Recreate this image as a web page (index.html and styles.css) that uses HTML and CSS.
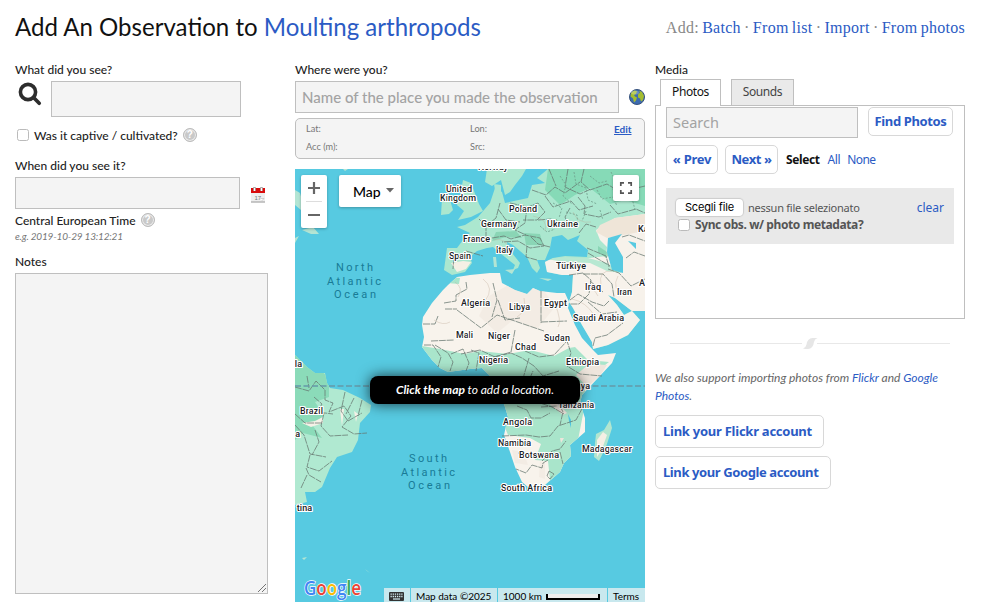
FILE: index.html
```html
<!DOCTYPE html>
<html lang="en">
<head>
<meta charset="utf-8">
<title>Add An Observation</title>
<link rel="stylesheet" href="styles.css">
</head>
<body>
<header class="head">
  <h1 class="title">Add An Observation to <a>Moulting arthropods</a></h1>
  <nav class="crumbs">Add: <a>Batch</a> · <a>From list</a> · <a>Import</a> · <a>From photos</a></nav>
</header>
<main class="cols">
  <section class="left">
    <div class="label">What did you see?</div>
    <div class="species">
      <svg class="glass" viewBox="0 0 24 24"><circle cx="10" cy="10" r="7.600" fill="none" stroke="#2d2d2d" stroke-width="3.600"/><path d="M15.800 15.800L21.200 21.200" stroke="#2d2d2d" stroke-width="3.700" stroke-linecap="round"/></svg>
      <div class="field species-field"></div>
    </div>
    <div class="captive"><span class="check"></span><span class="captive-text">Was it captive / cultivated?</span><span class="help">?</span></div>
    <div class="label when">When did you see it?</div>
    <div class="date">
      <div class="field date-field"></div>
      <svg class="cal" viewBox="0 0 14 16"><path d="M0 1h14v14.500H0z" fill="#eee"/><path d="M0 1h14v5H0z" fill="#d90b0b"/><path d="M0 15h14" stroke="#999"/><path d="M3.500 0v4M10.500 0v4" stroke="#aaa" stroke-width="2.600"/><path d="M3.500 1v3M10.500 1v3" stroke="#fff"/><text x="3.500" y="12.500" class="cal-text">17</text><path d="M9.500 11.500l3.500 0-2.500 2.500" fill="#fff" stroke="#aaa" stroke-width=".5"/></svg>
    </div>
    <div class="zone"><span class="zone-text">Central European Time</span><span class="help">?</span></div>
    <div class="example">e.g. 2019-10-29 13:12:21</div>
    <div class="label notes-label">Notes</div>
    <div class="field notes"><svg class="grip" viewBox="0 0 10 10"><path d="M1 9L9 1M5 9L9 5" stroke="#555" stroke-width=".8"/></svg></div>
  </section>

  <section class="mid">
    <div class="label">Where were you?</div>
    <div class="place">
      <div class="field place-field"><span class="place-text">Name of the place you made the observation</span></div>
      <svg class="globe" viewBox="0 0 16 16"><circle cx="8" cy="8" r="7.500" fill="#3d6bb0" stroke="#36517c"/><path d="M2 4l3-2.500 3 .5-1 3-2 1 1 1.500 2 1-1 3-2 2-1-4-2.500-2zM10 1.500l3 1.500 2 4-1 4-2 1.500-1-3-2-1 0-3 2-2z" fill="#a5bd2f"/><ellipse cx="6" cy="3.500" rx="4" ry="2" fill="#fff" opacity=".25"/></svg>
    </div>
    <div class="coords"><span>Lat:</span><span>Lon:</span><a class="edit">Edit</a><span>Acc (m):</span><span>Src:</span></div>
    <div class="map">
      <svg class="world" viewBox="295 169 350 433">
        <defs>
          <clipPath id="africa"><path d="M457 277L448 285 443 290 432 303 423 317 422 325 424 337 422 347 432 360 440 368 448 372 470 369 482 368 490 376 497 385 505 407 508 417 504 435 510 452 515 467 522 482 528 487 545 485 560 472 564 463 571 456 570 445 585 432 585 418 580 403 582 395 598 378 612 363 616 353 598 355 593 350 582 338 575 325 568 308 569 302 565 293 557 293 540 291 533 288 527 294 515 290 502 283 500 273 490 273 470 275Z"/></clipPath>
          <clipPath id="europe"><path d="M457 248L447 248 444 270 452 275 465 272 472 263 470 257 477 251 487 248 493 247 500 253 515 265 513 270 518 268 520 263 508 248 507 242 513 245 527 257 532 268 537 273 540 268 537 260 545 260 550 248 552 237 562 235 568 240 580 235 577 241 588 250 587 257 565 256 553 258 545 262 547 272 562 275 573 275 572 292 569 302 573 308 582 325 592 342 593 349 608 345 628 335 640 320 632 311 624 315 617 305 608 295 615 298 628 308 632 311 645 311 645 169 548 169 537 178 545 183 532 185 528 198 505 203 502 192 495 188 490 203 478 217 465 225 457 227 470 233 463 240Z"/></clipPath>
          <clipPath id="brazil"><path d="M295 355L307 367 315 373 325 373 327 383 330 388 343 390 360 398 371 405 370 412 360 423 358 440 352 452 337 457 330 468 322 487 315 492 305 492 307 502 295 505Z"/></clipPath>
        </defs>
        <rect x="295" y="169" width="350" height="433" fill="#57cae1"/>
        <g clip-path="url(#europe)">
          <rect x="440" y="169" width="205" height="190" fill="#abe7cf"/>
          <path d="M548 169H645V206L625 200 610 204 590 188 575 195 560 205 545 190Z" fill="#86dab7"/>
          <path d="M645 214L615 218 604 225 596 230 600 240 607 247 606 256 590 258 545 260 545 275 570 277 565 300 580 350 645 350Z" fill="#f7f2eb"/>
          <path d="M645 214L615 218 600 225 596 232 607 238 645 231Z" fill="#efe5d8"/>
          <path d="M546 259L565 257 588 258 607 263 622 273 607 271 590 263 565 262Z" fill="#b7e8d2"/>
          <path d="M451 263l12-2 8 1-5 7-9 3Z" fill="#f5f0e5"/>
          <path d="M496 232l20-1 6 7-16-1-14 4zM524 233l16 1 3 11-17 0zM598 246l12 8-4 4-8-6z" fill="#7ccda9" opacity=".7"/>
        </g>
        <path d="M487 169L485 182 492 186 501 180 505 195 510 192 515 185 522 176 526 169ZM494 184l7 1 0 11-5 0zM463 180l8 3 3 8 5 13 4 7-12 6-13 3 6-9-7-6 3-9zM442 199l8 1 3 10-4 4-8 1z" fill="#abe7cf"/>
        <path d="M295 190l5 3 2 7 6 8-7 2-6-5zM302 230l11-3 6 7-8 0zM295 238l4-2-4 7zM343 169h5l-3 2zM493 257l3 0 1 10-3 0zM505 270l10-1-3 5zM539 278l13 1-4 2zM302 558l5-1-3 3zM365 569l5 4-3-2z" fill="#b3e5d4"/>
        <g clip-path="url(#africa)">
          <rect x="415" y="270" width="205" height="220" fill="#f8f3ec"/>
          <path d="M415 345L440 349 465 354 480 351 508 354 530 350 554 356 569 348 575 347 588 360 609 362 585 380 585 404 578 440 565 485 550 480 548 461 535 460 541 444 530 438 508 435 490 390 420 380Z" fill="#a9e5cb"/>
          <path d="M450 277l10 1-1 6-12-1z" fill="#a9e5cb"/>
          <path d="M576 375l13-11 18 1-7 11-13 11zM548 403l10 0 9 10-4 2zM560 438l4 0-3 5z" fill="#eee5dc"/>
          <path d="M517 280l26 9 12 18-18 22-24-9-16 13-18-17 10-20zM540 461l5 2 0 16-6-2zM512 450l12 2 4 13-13-2z" fill="#f0e8df" opacity=".6"/>
          <path d="M563 377l8 3-3 7-5-3zM568 414l3 6 0 8-2-7zM557 404l2 8" fill="#4ec4e0"/>
        </g>
        <g clip-path="url(#brazil)">
          <rect x="295" y="350" width="80" height="160" fill="#b0e9d1"/>
          <path d="M295 355L310 361 329 378 329 397 315 402 324 415 313 426 322 438 303 433 295 440Z" fill="#8bdbb9"/>
          <path d="M302 423l13-2 8-4 0 6-12 4zM340 409l4 0-2 17zM354 411l4 3-2 8z" fill="#f5f1e7"/>
        </g>
        <path d="M610 420L612 428 607 444 603 453 599 461 594 457 595 443 596 434 604 430Z" fill="#b2e6d0"/><path d="M603 432l4 3-5 14-5 8 0-17z" fill="#f5efe4"/>
        <path d="M608 238L622 234 615 243 623 257 623 273 612 270 607 252ZM628 241l8 2 0 6-5-5z" fill="#57cae1"/>
        <g class="borders">
          <path d="M444 303l12-2 0-6 11-6-1-7M445 309h12M423 324h12l3-8M431 341l23-1M457 310l24 18 16-13 6 2 41 14M493 283l4 17-5 17M498 300l7 20 15-2M541 291v32M541 322l26-1M515 330l-4 22-16 5-15-7-19 4M424 345l9 0 8 12-3 10M435 345l13 8 5 9-3 9M451 354l12-5 6 14-3 8M471 350l8 3-3 18M493 357l18-4 11 5 12 8 9 10 16-5M525 351l14 6 15-2 13-14 4 12-4 13 13 8 22 2M510 387l17-2 6-14M529 358l-5 17-4 23M502 436l24-1 13 2 11-1 8-10 18-6 8-15M517 406l10 4 4 8 10 0 9-5M541 407l16-1M559 376l-4 20 8 16-3 13M534 401l18 6 12 7M548 460l-5 3-1 5-10-3-6 8-10-4M542 461l10-10 8-2 6-8M560 452l3 12M518 453l18 2M549 471l5 3-4 5-3-3z"/>
          <path d="M466 251l17 5M449 254l5 1-1 14M479 219l7 7 0 12M486 226l10-8 4-15M498 209l8 11 14 2M510 203l18 4 10-4 7 9-8 8-14 0M492 238l12-2 7 3 14-4 15 3 4 8-14 2-12-7-16 1M527 207l-2 16-10 7 11 5M538 220l13-1 11 7 8-4M531 237l7 7 12 3M527 246l-1 11 11 3M532 190l14 5 9-8 10 6 15-11M545 196l8 11 18-6 8 9 14-4M549 169l7 17M568 169l-3 18 15 7 11-5M584 169l-3 13 9 8 17-6 13 8 25-6M578 197l7 9-1 8 15 3 12-5M610 205l8 9 18-5 9 4M570 208l-5 9 5 12M579 233l7-9 10 3M587 248l19 8 3 11M588 253l22 13M569 275l14-2 8 7-2 14-10 10-9 0M583 274l20 0 9 10 2 13M608 269l11 4 12 13 14-7M590 281l13 11M570 300l8-6 14 8 12 4 5-5M593 346l2-8 12-3 16-12M588 302l14 12 15-2M622 237l7-2 16 6M626 258l8-6 11 4"/>
          <path d="M295 387l14 4 7-10 9 9 0 10 8 3-4 9 15-6 7 10-9 11 12 7 13-1M307 376l2 12M314 397l8 7-5 8 16 2M324 413l-3 13 9 10 18-1M295 414l10 9 17 0M295 425l9 10 6 19 16 3M315 430l4 12-7 13M310 455l-3 12 12 4 13-10M306 468l3 7 12 7M307 475l-6 13M345 392l-4 19 7 10 14-8M354 398l-8 16M362 400l-4 16"/>
        </g>
        <path class="states" d="M560 176l6 9-3 11 9 8M574 172l2 12 10 4 2 12 9 4M590 176l9 7 8-2M597 190l5 9 11-2 4 9M611 172l5 10-4 9M627 176l-4 10 8 8 9-2M553 203l9 5-3 10M566 212l11 3 1 11M586 211l-4 10M600 210l3 10M632 198l3 12M540 226l7 6 8-3M556 219l5 8"/>
        <path class="texture" d="M455 282q9 6 3 15m-24 23q9 6 16 2m33-43q12 9 2 22m70 3q7 17 3 23m-34-29q3 13-7 19m55-18q14 3 22 16m7-30q-3-15 11-14m6 5q-7 13 6 19m-40-12q10 5 14 13m-65-80q16 3 12 15m28-19q5 12 18 10m-97 18q12-3 15 10"/>
        <path d="M295 386H645" stroke="#6699a8" stroke-width="1.500" stroke-dasharray="6 2.500"/>
        <g class="ocean">
          <text x="336" y="271" textLength="37">North</text><text x="327" y="285" textLength="54">Atlantic</text><text x="334" y="298" textLength="42">Ocean</text>
          <text x="409" y="462" textLength="38">South</text><text x="401" y="476" textLength="54">Atlantic</text><text x="408" y="489" textLength="42">Ocean</text>
        </g>
        <g class="countries">
          <text x="478" y="170.500" textLength="30">Norway</text>
          <text x="446" y="192" textLength="26">United</text><text x="440" y="201" textLength="36">Kingdom</text>
          <text x="509" y="212" textLength="28">Poland</text><text x="481" y="227" textLength="36">Germany</text><text x="547" y="227" textLength="31">Ukraine</text><text x="463" y="242" textLength="27">France</text><text x="496" y="253" textLength="17">Italy</text><text x="449" y="259" textLength="22">Spain</text><text x="556" y="269" textLength="30">Türkiye</text><text x="638" y="232">Ka</text><text x="639" y="286">A</text><text x="585" y="290" textLength="16">Iraq</text><text x="617" y="295" textLength="15">Iran</text><text x="461" y="306" textLength="29">Algeria</text><text x="509" y="310" textLength="21">Libya</text><text x="544" y="306" textLength="23">Egypt</text><text x="573" y="321" textLength="51">Saudi Arabia</text><text x="456" y="338" textLength="17">Mali</text><text x="488" y="339" textLength="22">Niger</text><text x="544" y="341" textLength="26">Sudan</text><text x="515" y="350" textLength="21">Chad</text><text x="479" y="363" textLength="29">Nigeria</text><text x="566" y="365" textLength="33">Ethiopia</text><text x="565" y="389" textLength="25">Kenya</text><text x="558" y="408" textLength="36">Tanzania</text><text x="503" y="425" textLength="29">Angola</text><text x="498" y="446" textLength="33">Namibia</text><text x="519" y="458" textLength="40">Botswana</text><text x="582" y="452" textLength="50">Madagascar</text><text x="501" y="491" textLength="51">South Africa</text><text x="300" y="414" textLength="23">Brazil</text><text x="302" y="367" text-anchor="end">la</text><text x="300" y="437" text-anchor="end">a</text><text x="312" y="511" text-anchor="end">tina</text>
        </g>
        <text x="304" y="595" textLength="57" lengthAdjust="spacingAndGlyphs" class="google"><tspan fill="#4285f4">G</tspan><tspan fill="#ea4335">o</tspan><tspan fill="#fbbc04">o</tspan><tspan fill="#4285f4">g</tspan><tspan fill="#34a853">l</tspan><tspan fill="#ea4335">e</tspan></text>
      </svg>
      <div class="zoomer"><svg viewBox="0 0 26 53"><path d="M7 13H19M13 7V19M7 40H19" stroke="#666" stroke-width="2.200"/><path d="M5 26.500H21" stroke="#ddd"/></svg></div>
      <div class="maptype">Map<svg class="caret" viewBox="0 0 8 5"><path d="M0 0h8L4 4.500z" fill="#666"/></svg></div>
      <div class="full"><svg viewBox="0 0 26 26"><path d="M7.800 11V7.800H11M15 7.800h3.200V11M18.200 15v3.200H15M11 18.200H7.800V15" fill="none" stroke="#555" stroke-width="1.700"/></svg></div>
      <div class="tip"><span class="tip-text"><b>Click the map</b> to add a location.</span></div>
      <div class="attrib">
        <span class="kbd"><svg viewBox="0 0 15 9"><rect width="15" height="9" rx="1" fill="#333"/><path d="M1.500 2.200h12M1.500 4.500h12" stroke="#d5eef3" stroke-width="1.300" stroke-dasharray="1.300 .85"/><path d="M4 7h7" stroke="#d5eef3" stroke-width="1.200"/></svg></span>
        <span class="data">Map data ©2025</span>
        <span class="km">1000 km<i class="bar"></i></span>
        <span class="terms">Terms</span>
      </div>
    </div>
  </section>

  <section class="right">
    <div class="label">Media</div>
    <div class="tabs"><div class="tab on">Photos</div><div class="tab">Sounds</div></div>
    <div class="panel">
      <div class="row"><div class="field search"><span class="search-text">Search</span></div><a class="btn find"><span>Find Photos</span></a></div>
      <div class="row pager"><a class="btn prev"><span>« Prev</span></a><a class="btn next"><span>Next »</span></a><b class="select">Select</b><a class="all">All</a><a class="none">None</a></div>
      <div class="upload">
        <div class="file"><span class="choose">Scegli file</span><span class="nofile">nessun file selezionato</span><a class="clear">clear</a></div>
        <div class="sync"><span class="check"></span><b>Sync obs. w/ photo metadata?</b></div>
      </div>
    </div>
    <svg class="divider" viewBox="0 0 280 14"><path d="M0 6.500H132M147 6.500H280" stroke="#e8e8e8"/><path d="M133 11.500q3-1 3.500-4 1-6.500 6-6.500h5q-3 1-3.500 4-1 7-6 7-3 0-5-.5" fill="#e6e6e6"/></svg>
    <p class="support">We also support importing photos from <a>Flickr</a> and <a>Google<br>Photos</a>.</p>
    <a class="btn link flickr"><span>Link your Flickr account</span></a>
    <a class="btn link goog"><span>Link your Google account</span></a>
  </section>
</main>
</body>
</html>
```
FILE: styles.css
```css
* { box-sizing: border-box; }
body { margin: 0; width: 1000px; height: 608px; overflow: hidden; background: #fff; color: #222; font-family: Lato, "Liberation Sans", sans-serif; font-size: 12px; }
a { color: #2b5bc4; }
svg { display: block; }
.head { display: flex; justify-content: space-between; height: 62px; padding: 10px 35px 0 15px; }
.title { margin: 0; font-size: 24.05px; line-height: 33px; font-weight: 400; color: #111; white-space: nowrap; }
.crumbs { font: 16px/36px "Liberation Serif", serif; color: #888; white-space: nowrap; letter-spacing: .28px; word-spacing: -1.1px; }
.cols { display: flex; padding-left: 15px; }
.left { width: 280px; }
.mid { width: 350px; margin-right: 10px; }
.right { width: 310px; }
.label { height: 16px; line-height: 16px; font-weight: 500; white-space: nowrap; }
.field { background: #f4f4f4; border: 1px solid #bfbfbf; }
.species { display: flex; padding-top: 3px; }
.glass { width: 24px; height: 24px; margin: 1px 9px 0 3px; }
.species-field { width: 190px; height: 36px; }
.captive { display: flex; align-items: center; height: 18px; margin-top: 9px; padding-left: 2px; }
.check { width: 12px; height: 12px; border: 1px solid #bbb; border-radius: 2.500px; background: #fff; }
.captive-text { margin: 0 5px; font-weight: 500; }
.help { width: 14px; height: 14px; border-radius: 50%; background: #c9c9c9; border: 1px solid #bbb; box-shadow: inset 0 0 0 1px #eee; color: #fff; font: bold 10px/12px "Liberation Sans", sans-serif; text-align: center; }
.when { margin-top: 14px; }
.date { display: flex; align-items: flex-end; margin-top: 3px; }
.date-field { width: 225px; height: 32px; }
.cal { width: 14px; height: 16px; margin: 0 0 6px 11px; }
.cal-text { font: 6px "Liberation Sans", sans-serif; fill: #777; }
.zone { display: flex; align-items: center; height: 20px; margin-top: 1px; }
.zone-text { margin-right: 5px; font-weight: 500; }
.example { height: 12px; line-height: 12px; font-size: 10px; letter-spacing: -.18px; font-style: italic; color: #777; }
.notes-label { margin-top: 12px; }
.notes { display: flex; align-items: flex-end; justify-content: flex-end; width: 253px; height: 321px; margin-top: 3px; }
.grip { width: 10px; height: 10px; }
.place { display: flex; align-items: center; padding-top: 3px; }
.place-field { width: 324px; height: 32px; padding: 0 6px; font-size: 15px; line-height: 31px; color: #a3a3a3; font-weight: 500; white-space: nowrap; }
.globe { width: 16px; height: 16px; margin-left: 10px; }
.coords { display: grid; grid-template-columns: 164px 144px 20px; grid-auto-rows: 18px; height: 41px; margin-top: 5px; padding: 1px 10px; border: 1px solid #bfbfbf; border-radius: 5px; background: #f4f4f4; font-size: 9.200px; line-height: 18px; color: #777; }
.edit { font-size: 10px; font-weight: 700; text-decoration: underline; }
.map { position: relative; width: 350px; height: 433px; margin-top: 10px; overflow: hidden; }
.world { width: 350px; height: 433px; }
.borders path { fill: none; stroke: #66756f; stroke-width: .75; stroke-dasharray: 7 .8; }
.states { fill: none; stroke: #6f9d8a; stroke-width: .8; stroke-dasharray: 2 1.500; }
.texture { fill: none; stroke: #bda994; stroke-width: .7; opacity: .5; }
.ocean { font: 11px Roboto, sans-serif; fill: #187b96; }
.countries { font: 500 9px Roboto, sans-serif; fill: #202124; stroke: #fff; stroke-width: 2.200px; paint-order: stroke; stroke-linejoin: round; transform: translateY(-.5px); }
.google { font: 600 19.500px "Open Sans", sans-serif; stroke: #fff; stroke-width: 1.500px; paint-order: stroke; }
.zoomer, .maptype, .full { position: absolute; top: 6px; background: #fff; border-radius: 2px; box-shadow: 0 1px 3px #0004; }
.zoomer { left: 6px; width: 26px; height: 53px; }
.maptype { left: 44px; display: flex; align-items: center; gap: 5px; width: 62px; height: 32px; padding: 1px 0 0 14px; color: #000; font-size: 14px; font-weight: 500; }
.caret { width: 8px; height: 5px; margin-top: -3px; }
.full { right: 6px; width: 26px; height: 26px; }
.tip { position: absolute; left: 75px; top: 207px; width: 210px; height: 28px; border-radius: 8px; background: #000; color: #fff; box-shadow: 0 0 14px #000b; font-style: italic; line-height: 28px; text-align: center; white-space: nowrap; }
.attrib { position: absolute; right: 0; bottom: 0; display: flex; gap: 1px; height: 14px; color: #000; font-size: 10px; line-height: 17px; white-space: nowrap; }
.attrib > span { display: block; height: 14px; background: #c8e8ee; }
.attrib .kbd { width: 26px; padding: 4px 0 0 5px; }
.kbd svg { width: 15px; height: 9px; }
.attrib .data { width: 86px; padding-left: 5px; }
.attrib .km { display: flex; width: 109px; padding-left: 5px; }
.bar { width: 54px; height: 6px; margin: 6px 0 0 4px; border: 2px solid #000; border-top: 0; background: #eee; }
.attrib .terms { width: 37px; padding-left: 5px; }
.tabs { display: flex; gap: 10px; height: 26px; margin-top: 1px; padding-left: 5px; font: 12px/24px "Noto Sans", sans-serif; letter-spacing: -.4px; }
.tab { width: 63px; height: 26px; border: 1px solid #bfbfbf; border-bottom: 0; background: #eaeaea; text-align: center; color: #444; }
.tab.on { position: relative; width: 61px; height: 27px; background: #fff; color: #111; }
.panel { width: 310px; height: 214px; padding: 1px 10px; border: 1px solid #bfbfbf; font-family: "Noto Sans", sans-serif; }
.row { display: flex; white-space: nowrap; }
.search { width: 192px; height: 31px; margin-right: 10px; padding-left: 6px; font-size: 14.500px; line-height: 29px; color: #a3a3a3; }
.btn { display: block; height: 29px; border: 1px solid #d8d8d8; border-radius: 5px; font: bold 13px/27px "Noto Sans", sans-serif; letter-spacing: -.25px; text-align: center; white-space: nowrap; }
.find { width: 85px; letter-spacing: -.38px; }
.pager { align-items: center; margin-top: 7px; }
.prev { width: 52px; margin-right: 7px; }
.next { width: 53px; margin-right: 8px; letter-spacing: -.4px; }
.select { color: #111; margin-right: 8px; letter-spacing: -.4px; }
.all { margin-right: 7px; letter-spacing: -.4px; }
.none { letter-spacing: -.6px; }
.upload { width: 288px; height: 56px; margin-top: 14px; padding: 10px 10px 0; background: #e9e9e9; }
.file { display: flex; align-items: center; height: 18px; white-space: nowrap; }
.choose { width: 67px; height: 17px; border-radius: 4px; background: #fff; box-shadow: 0 0 1px 1px #ccc; color: #000; font: 11px/17px Inter, sans-serif; letter-spacing: -.15px; text-align: center; }
.nofile { margin-left: 5px; font-size: 11px; letter-spacing: -.24px; color: #555; }
.clear { margin-left: auto; }
.sync { display: flex; align-items: center; gap: 5px; height: 17px; padding-left: 2px; color: #555; white-space: nowrap; letter-spacing: -.4px; }
.divider { width: 280px; height: 14px; margin: 18px 0 0 15px; }
.support { margin: 18px 0 10px; font-size: 12px; line-height: 18px; font-style: italic; color: #666; white-space: nowrap; }
.link { height: 33px; line-height: 31px; padding-left: 7px; text-align: left; }
.flickr { width: 169px; margin-bottom: 8px; }
.goog { width: 176px; letter-spacing: -.4px; }
```
